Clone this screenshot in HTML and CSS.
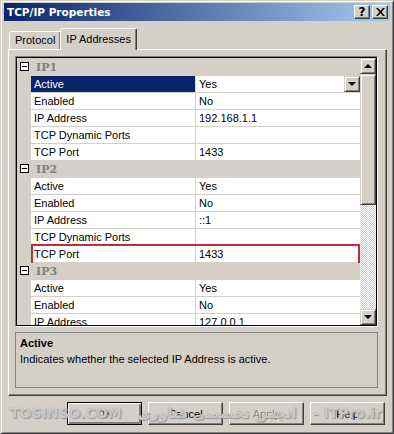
FILE: index.html
```html
<html>
	<head>
		<title>TCP/IP Properties</title>
		<link rel="stylesheet" href="styles.css">
	</head>
	<body>
		<div class="window">
			<div class="titlebar">
				<span class="caption">TCP/IP Properties</span>
				<div class="capbtns">
					<span class="capbtn">?</span>
					<span class="capbtn">
						<svg width="9" height="8" viewBox="0 0 9 8"><path d="M0 0h2l2.5 2.8L7 0h2L5.5 4 9 8H7L4.5 5.2 2 8H0l3.5-4z" fill="#000"/></svg>
					</span>
				</div>
			</div>

			<div class="tabs">
				<span class="tab">Protocol</span>
				<span class="tab active">IP Addresses</span>
			</div>

			<div class="panel">
				<div class="grid">
					<div class="rows">
						<div class="row cat"><span class="gutter"><i class="minus"></i></span><span class="catname">IP1</span></div>
						<div class="row sel"><span class="gutter"></span><span class="name">Active</span><span class="value">Yes<span class="drop"><i class="arrow down"></i></span></span></div>
						<div class="row"><span class="gutter"></span><span class="name">Enabled</span><span class="value">No</span></div>
						<div class="row"><span class="gutter"></span><span class="name">IP Address</span><span class="value">192.168.1.1</span></div>
						<div class="row"><span class="gutter"></span><span class="name">TCP Dynamic Ports</span><span class="value"></span></div>
						<div class="row"><span class="gutter"></span><span class="name">TCP Port</span><span class="value">1433</span></div>

						<div class="row cat"><span class="gutter"><i class="minus"></i></span><span class="catname">IP2</span></div>
						<div class="row"><span class="gutter"></span><span class="name">Active</span><span class="value">Yes</span></div>
						<div class="row"><span class="gutter"></span><span class="name">Enabled</span><span class="value">No</span></div>
						<div class="row"><span class="gutter"></span><span class="name">IP Address</span><span class="value">::1</span></div>
						<div class="row"><span class="gutter"></span><span class="name">TCP Dynamic Ports</span><span class="value"></span></div>
						<div class="row marked"><span class="gutter"></span><span class="name">TCP Port</span><span class="value">1433</span></div>

						<div class="row cat"><span class="gutter"><i class="minus"></i></span><span class="catname">IP3</span></div>
						<div class="row"><span class="gutter"></span><span class="name">Active</span><span class="value">Yes</span></div>
						<div class="row"><span class="gutter"></span><span class="name">Enabled</span><span class="value">No</span></div>
						<div class="row"><span class="gutter"></span><span class="name">IP Address</span><span class="value">127.0.0.1</span></div>
					</div>
					<div class="scrollbar">
						<span class="sbtn"><i class="arrow up"></i></span>
						<span class="thumb"></span>
						<span class="track"></span>
						<span class="sbtn"><i class="arrow down"></i></span>
					</div>
				</div>

				<div class="desc">
					<div class="desc-title">Active</div>
					<div class="desc-text">Indicates whether the selected IP Address is active.</div>
				</div>
			</div>

			<div class="buttons">
				<span class="btn default">OK</span>
				<span class="btn">Cancel</span>
				<span class="btn disabled">Apply</span>
				<span class="btn">Help</span>
				<div class="watermark">
					<span>TOSINSO.COM</span>
					<span dir="rtl">انجمن تخصصی فناوری</span>
					<span>- ITPro.ir</span>
				</div>
			</div>
		</div>
	</body>
</html>
```

FILE: styles.css
```css
body {
	margin: 0;
	background: #d4d0c8;
	font-family: "Liberation Sans", Arial, sans-serif;
	font-size: 11px;
	color: black;
}

.window {
	width: 394px;
	height: 434px;
	box-sizing: border-box;
	padding: 3px;
	background: #d4d0c8;
	border: 1px solid;
	border-color: #d4d0c8 #404040 #404040 #d4d0c8;
	box-shadow: inset 1px 1px 0 #fff, inset -1px -1px 0 #808080;
	overflow: hidden;
}

.titlebar {
	height: 18px;
	margin-top: -1px;
	display: flex;
	align-items: center;
	justify-content: space-between;
	padding: 0 2px 0 3px;
	background: linear-gradient(to right, #0a246a, #a6caf0);
}

.caption {
	color: white;
	font-weight: bold;
	font-family: "DejaVu Sans", sans-serif;
	font-size: 10.5px;
}

.capbtns {
	display: flex;
	gap: 2px;
}

.capbtn {
	width: 16px;
	height: 14px;
	box-sizing: border-box;
	display: flex;
	align-items: center;
	justify-content: center;
	background: #d4d0c8;
	border: 1px solid;
	border-color: #fff #404040 #404040 #fff;
	box-shadow: inset -1px -1px 0 #808080;
	font-weight: bold;
	font-size: 12px;
	font-family: "DejaVu Sans", sans-serif;
	line-height: 12px;
}

.tabs {
	display: flex;
	align-items: flex-end;
	height: 23px;
	margin: 5px 0 0 5px;
	position: relative;
	z-index: 1;
}

.tab {
	height: 18px;
	padding: 0 5px;
	box-sizing: border-box;
	line-height: 17px;
	font-size: 11px;
	border: 1px solid;
	border-bottom: 0;
	border-color: #fff #404040 transparent #fff;
	box-shadow: inset -1px 0 0 #808080;
	border-radius: 2px 2px 0 0;
	background: #d4d0c8;
}

.tab.active {
	height: 22px;
	padding: 1px 5px 0 5px;
	margin-left: -1px;
	margin-bottom: -1px;
	line-height: 18px;
}

.panel {
	height: 347px;
	margin: 0 0 0 4px;
	width: 379px;
	box-sizing: border-box;
	border: 1px solid;
	border-color: #fff #404040 #404040 #fff;
	box-shadow: inset -1px -1px 0 #808080;
	padding: 6px 8px 0 6px;
}

.grid {
	display: flex;
	height: 271px;
	box-sizing: border-box;
	border: 1px solid;
	border-color: #808080 #fff #fff #808080;
	box-shadow: inset 1px 1px 0 #000, inset -1px -1px 0 #000;
	padding: 1px;
	overflow: hidden;
}

.rows {
	flex: 1;
	padding-top: 1px;
	overflow: hidden;
}

.row {
	display: flex;
	height: 17px;
	position: relative;
}

.gutter {
	width: 14px;
	flex: none;
	background: #d4d0c8;
	position: relative;
}

.minus {
	position: absolute;
	left: 3px;
	top: 3px;
	width: 9px;
	height: 9px;
	box-sizing: border-box;
	border: 1px solid #000;
	background: #fff;
}

.minus::after {
	content: "";
	position: absolute;
	left: 1px;
	top: 3px;
	width: 5px;
	height: 1px;
	background: #000;
}

.name,
.value {
	box-sizing: border-box;
	height: 17px;
	padding-left: 3px;
	line-height: 16px;
	background: #fff;
	border-bottom: 1px solid #d4d0c8;
	white-space: nowrap;
	font-size: 11px;
}

.name {
	width: 165px;
	border-right: 1px solid #d4d0c8;
}

.value {
	flex: 1;
	position: relative;
}

.cat {
	background: #d4d0c8;
}

.catname {
	padding-left: 5px;
	line-height: 17px;
	font-weight: bold;
	color: #808080;
	font-family: "DejaVu Serif", serif;
	font-size: 11px;
}

.sel .name {
	background: #0a246a;
	color: white;
}

.marked::after {
	content: "";
	position: absolute;
	left: 14px;
	right: 0;
	top: -2px;
	bottom: -2px;
	border: 2px solid #c8283a;
	pointer-events: none;
}

.drop {
	position: absolute;
	right: 0;
	top: 0;
	width: 16px;
	height: 16px;
	box-sizing: border-box;
	display: flex;
	align-items: center;
	justify-content: center;
	background: #d4d0c8;
	border: 1px solid;
	border-color: #d4d0c8 #404040 #404040 #d4d0c8;
	box-shadow: inset 1px 1px 0 #fff, inset -1px -1px 0 #808080;
}

.arrow {
	width: 0;
	height: 0;
	border-left: 4px solid transparent;
	border-right: 4px solid transparent;
}

.arrow.down {
	border-top: 4px solid #000;
}

.arrow.up {
	border-bottom: 4px solid #000;
}

.scrollbar {
	width: 16px;
	flex: none;
	display: flex;
	flex-direction: column;
}

.sbtn {
	height: 16px;
	box-sizing: border-box;
	display: flex;
	align-items: center;
	justify-content: center;
	background: #d4d0c8;
	border: 1px solid;
	border-color: #d4d0c8 #404040 #404040 #d4d0c8;
	box-shadow: inset 1px 1px 0 #fff, inset -1px -1px 0 #808080;
}

.thumb {
	height: 131px;
	box-sizing: border-box;
	background: #d4d0c8;
	border: 1px solid;
	border-color: #d4d0c8 #404040 #404040 #d4d0c8;
	box-shadow: inset 1px 1px 0 #fff, inset -1px -1px 0 #808080;
}

.track {
	flex: 1;
	background: repeating-conic-gradient(#fff 0 25%, #d4d0c8 0 50%) 0 0 / 2px 2px;
}

.desc {
	height: 56px;
	margin-top: 5px;
	box-sizing: border-box;
	border: 1px solid #808080;
	padding: 3px 4px;
}

.desc-title {
	font-weight: bold;
	font-size: 11px;
	line-height: 15px;
}

.desc-text {
	font-size: 11px;
	line-height: 17px;
}

.buttons {
	display: flex;
	justify-content: flex-end;
	gap: 6px;
	padding: 6px 5px 0 0;
	position: relative;
}

.btn {
	width: 75px;
	height: 23px;
	box-sizing: border-box;
	display: flex;
	align-items: center;
	justify-content: center;
	font-size: 11px;
	background: #d4d0c8;
	border: 1px solid;
	border-color: #fff #404040 #404040 #fff;
	box-shadow: inset -1px -1px 0 #808080;
}

.btn.default {
	border-color: #000;
	box-shadow: inset 1px 1px 0 #fff, inset -2px -2px 0 #808080;
}

.btn.disabled {
	color: #808080;
	text-shadow: 1px 1px 0 #fff;
}

.watermark {
	position: absolute;
	left: 6px;
	right: 8px;
	top: 9px;
	display: flex;
	justify-content: space-between;
	align-items: center;
	font-family: "DejaVu Sans", sans-serif;
	font-size: 14px;
	font-weight: bold;
	color: rgba(255, 255, 255, 0.55);
	text-shadow: 0 0 1px #888, 1px 1px 1px #999;
	pointer-events: none;
	white-space: nowrap;
}
```
